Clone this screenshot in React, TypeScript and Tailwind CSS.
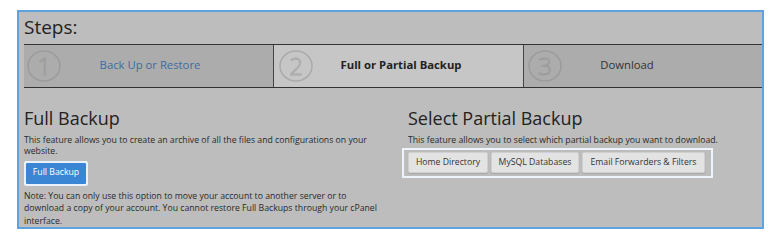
import React from "react";

const StepCircle: React.FC<{ n: number; tone: string }> = ({ n, tone }) => (
  <svg width="34" height="32" viewBox="0 0 34 32" className="shrink-0 overflow-visible">
    <ellipse cx="17" cy="16" rx="16" ry="15" fill="none" stroke={tone} strokeWidth="1.5" />
    <text
      x="17"
      y="25"
      textAnchor="middle"
      fontSize="24"
      fontWeight="300"
      fontFamily="'Open Sans', sans-serif"
      fill="none"
      stroke={tone}
      strokeWidth="0.9"
    >
      {n}
    </text>
  </svg>
);

const partials = [
  { label: "Home Directory", w: "w-[80px]" },
  { label: "MySQL Databases", w: "w-[88px]" },
  { label: "Email Forwarders & Filters", w: "w-[123px]" },
];

export default function App() {
  return (
    <div className="w-[779px] h-[243px] bg-white pt-[10px] pl-[17px] font-['Open_Sans',sans-serif]">
      <div className="w-[747px] h-[219px] border-2 border-[#5ea2e2] bg-[#bdbdbd] flex flex-col">
        {/* steps header */}
        <div className="pl-[5px] h-[32px] flex items-center text-[19px] text-[#222] leading-none">
          Steps:
        </div>

        <div className="ml-[5px] h-[44px] flex border-y border-[#333]">
          <div className="w-[250px] bg-[#acacac] border-r border-[#444] flex items-center pl-[3px]">
            <StepCircle n={1} tone="#9c9c9c" />
            <span className="flex-1 text-center pr-[34px] text-[11.3px] text-[#3b6ca3]">Back Up or Restore</span>
          </div>
          <div className="w-[250px] bg-[#c6c6c6] border-r border-[#444] flex items-center pl-[5px]">
            <StepCircle n={2} tone="#ababab" />
            <span className="flex-1 text-center pr-[34px] text-[11.3px] font-bold text-[#222]">Full or Partial Backup</span>
          </div>
          <div className="flex-1 bg-[#acacac] flex items-center pl-[4px]">
            <StepCircle n={3} tone="#9c9c9c" />
            <span className="flex-1 text-center pr-[70px] text-[11.3px] text-[#333]">Download</span>
          </div>
        </div>

        <div className="flex pl-[5px] pt-[19px] text-[#2a2a2a]">
          <div className="w-[384px]">
            <h2 className="text-[18px] leading-[22px] text-[#222]">Full Backup</h2>
            <p className="mt-[6px] text-[8.7px] leading-[11px] w-[350px]">
              This feature allows you to create an archive of all the files and configurations on your website.
            </p>
            <div className="mt-[4px] w-[64px] p-[2px] bg-[#e9f1fa] rounded-[2px]">
              <button className="block w-full h-[21px] bg-[#3a86d4] text-white text-[8.7px] rounded-[1px]">Full Backup</button>
            </div>
            <p className="mt-[4px] text-[8.7px] leading-[12.5px] w-[362px]">
              Note: You can only use this option to move your account to another server or to download a copy of
              your account. You cannot restore Full Backups through your cPanel interface.
            </p>
          </div>
          <div className="flex-1">
            <h2 className="text-[18px] leading-[22px] text-[#222]">Select Partial Backup</h2>
            <p className="mt-[6px] text-[8.7px] leading-[11px]">
              This feature allows you to select which partial backup you want to download.
            </p>
            <div className="-ml-[6px] mt-[2px] w-[311px] h-[30px] border-2 border-[#eef4fb] flex items-center gap-[3px] pl-[4px]">
              {partials.map((p) => (
                <button
                  key={p.label}
                  className={`${p.w} h-[21px] bg-[#e3e3e3] border border-[#d0d0d0] rounded-[2px] shadow-[0_1px_1px_rgba(0,0,0,0.12)] text-[8.7px] text-[#333]`}
                >
                  {p.label}
                </button>
              ))}
            </div>
          </div>
        </div>
      </div>
    </div>
  );
}
